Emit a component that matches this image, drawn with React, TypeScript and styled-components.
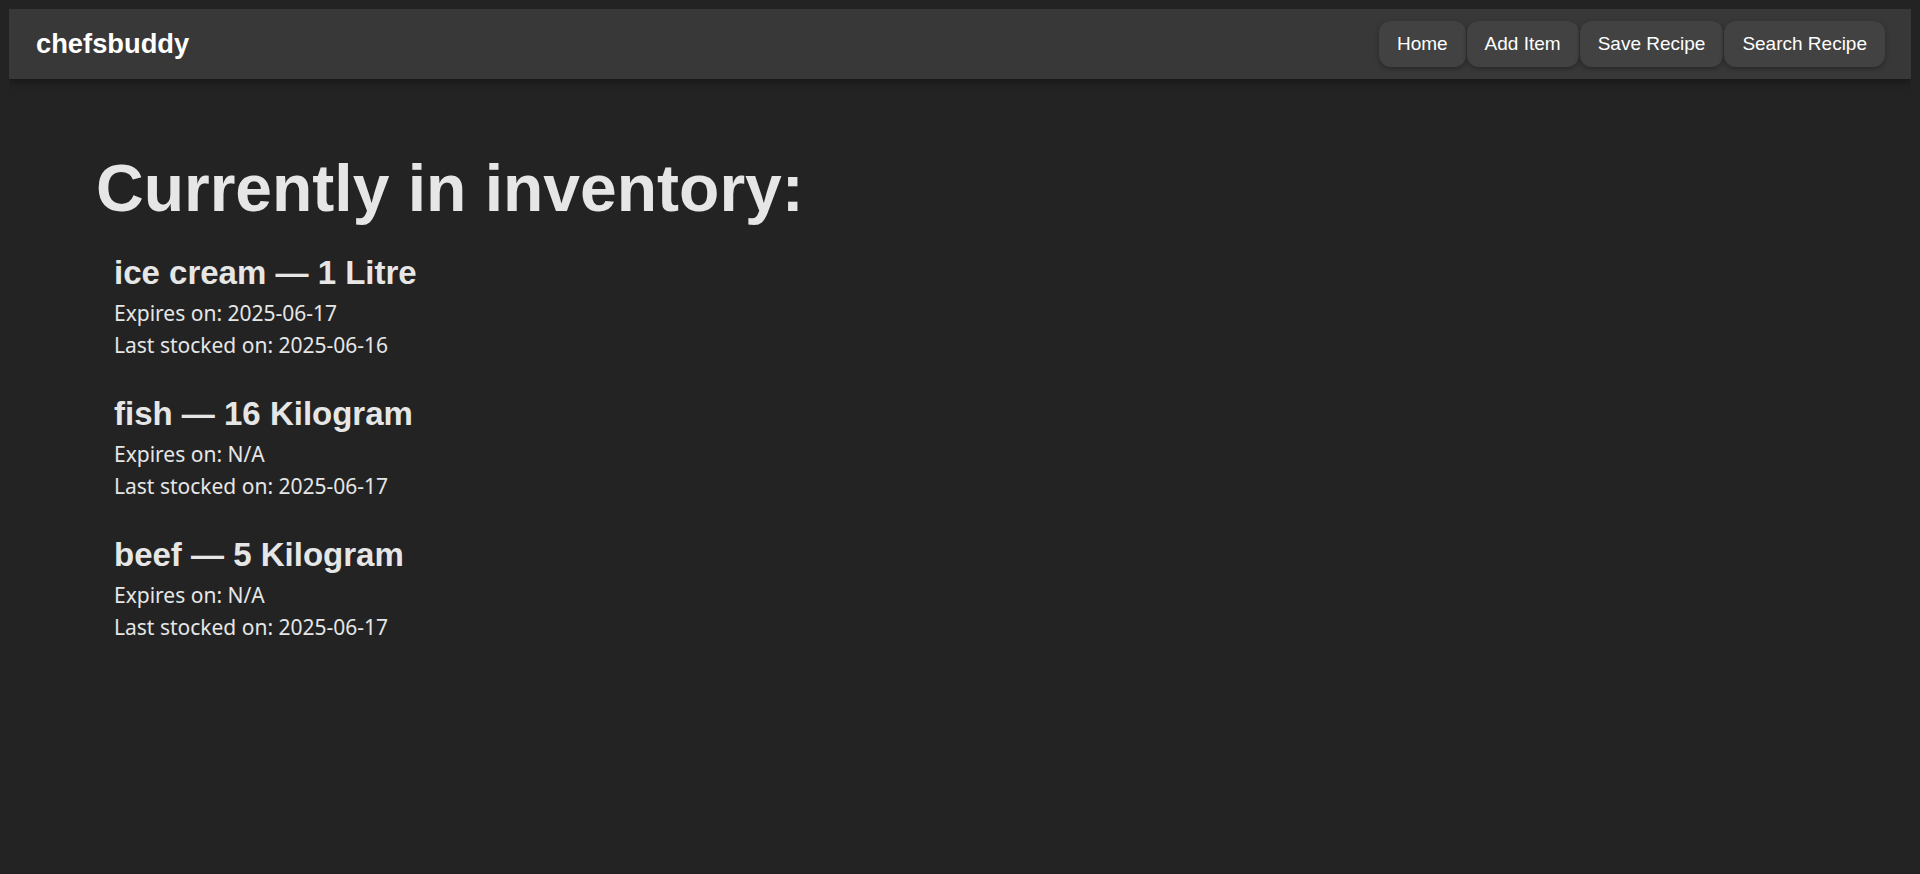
import React from "react";
import styled, { createGlobalStyle } from "styled-components";

const GlobalStyle = createGlobalStyle`
  html, body {
    background: #232323;
  }
  body {
    margin: 9px;
    color: #e6e6e6;
    font-family: "Liberation Sans", Arial, sans-serif;
  }
`;

const NavBar = styled.nav`
  display: flex;
  align-items: center;
  justify-content: space-between;
  height: 70px;
  padding: 0 26px 0 27px;
  background: #383838;
  box-shadow: 0 2px 8px rgba(0, 0, 0, 0.45);
`;

const Logo = styled.div`
  font-family: "Liberation Sans", Arial, sans-serif;
  font-weight: 700;
  font-size: 27.3px;
  color: #ffffff;
`;

const NavLinks = styled.div`
  display: flex;
  gap: 1px;
`;

const NavButton = styled.button`
  height: 46px;
  padding: 0 18px;
  border: none;
  border-radius: 12px;
  background: #424242;
  color: #ffffff;
  font-family: "Liberation Sans", Arial, sans-serif;
  font-size: 19px;
  box-shadow: 0 2px 5px rgba(0, 0, 0, 0.3);
  cursor: pointer;
`;

const Main = styled.main`
  padding: 76px 0 0 87px;
`;

const Heading = styled.h1`
  margin: 0 0 35px;
  font-family: "Liberation Sans", Arial, sans-serif;
  font-weight: 700;
  font-size: 66px;
  line-height: 66px;
  color: #e6e6e6;
`;

const ItemList = styled.div`
  display: flex;
  flex-direction: column;
  gap: 36px;
  padding-left: 18px;
`;

const Item = styled.section`
  display: flex;
  flex-direction: column;
`;

const ItemTitle = styled.h2`
  margin: 0 0 8px;
  font-family: "Liberation Sans", Arial, sans-serif;
  font-weight: 700;
  font-size: 33px;
  line-height: 33px;
  color: #e6e6e6;
`;

const Detail = styled.p`
  margin: 0;
  font-family: "Noto Sans", "Open Sans", sans-serif;
  font-size: 21px;
  line-height: 32px;
  color: #e6e6e6;
`;

const items = [
  { name: "ice cream", qty: "1 Litre", expires: "2025-06-17", stocked: "2025-06-16" },
  { name: "fish", qty: "16 Kilogram", expires: "N/A", stocked: "2025-06-17" },
  { name: "beef", qty: "5 Kilogram", expires: "N/A", stocked: "2025-06-17" },
];

export default function App() {
  return (
    <>
      <GlobalStyle />
      <NavBar>
        <Logo>chefsbuddy</Logo>
        <NavLinks>
          <NavButton>Home</NavButton>
          <NavButton>Add Item</NavButton>
          <NavButton>Save Recipe</NavButton>
          <NavButton>Search Recipe</NavButton>
        </NavLinks>
      </NavBar>
      <Main>
        <Heading>Currently in inventory:</Heading>
        <ItemList>
          {items.map((it) => (
            <Item key={it.name}>
              <ItemTitle>
                {it.name} — {it.qty}
              </ItemTitle>
              <Detail>Expires on: {it.expires}</Detail>
              <Detail>Last stocked on: {it.stocked}</Detail>
            </Item>
          ))}
        </ItemList>
      </Main>
    </>
  );
}
